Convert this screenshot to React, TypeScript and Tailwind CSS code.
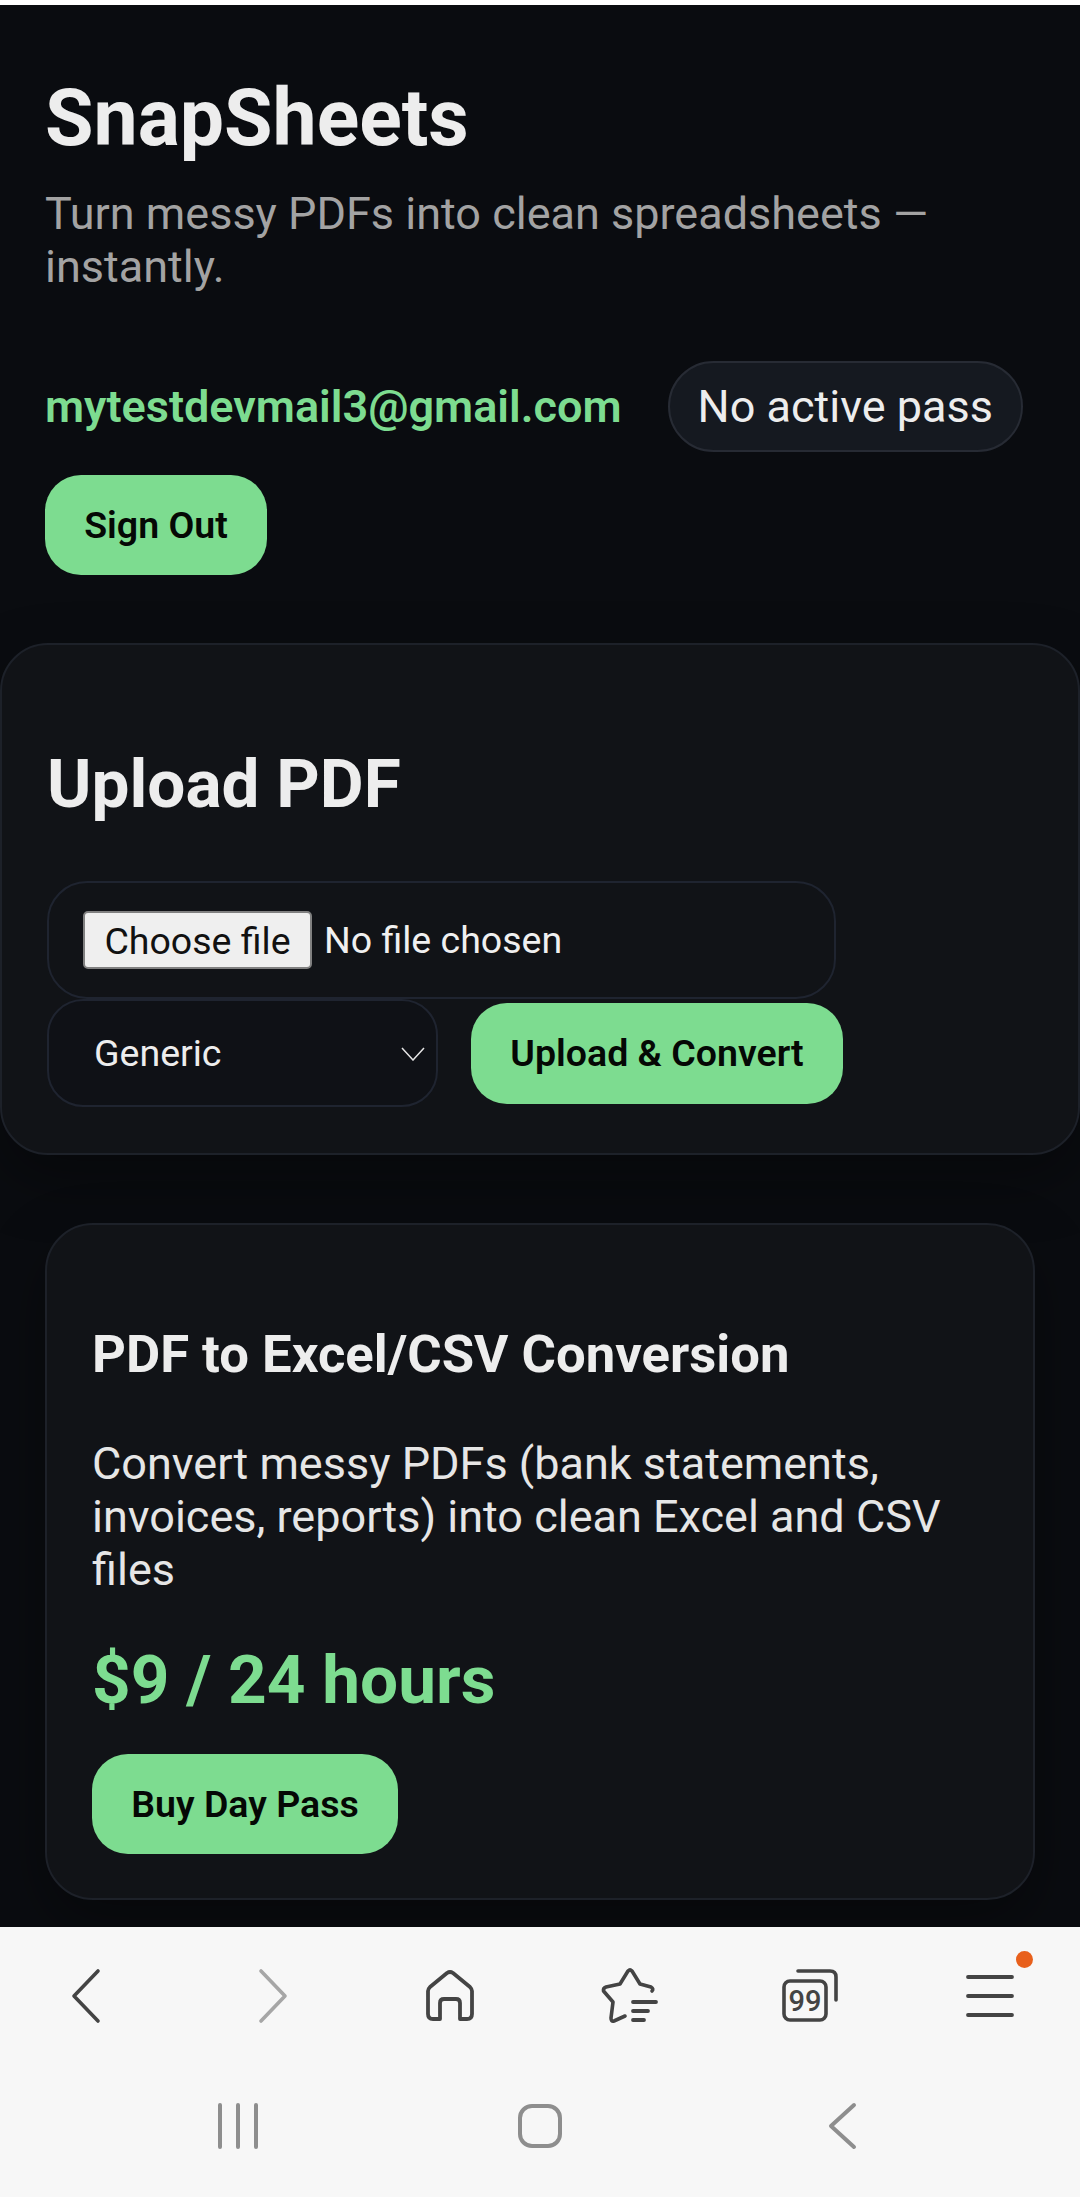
import React from "react";

const IconSvg = ({ children, className }: { children: React.ReactNode; className?: string }) => (
  <svg width="60" height="60" viewBox="0 0 60 60" fill="none" strokeLinecap="round" strokeLinejoin="round" className={className}>
    {children}
  </svg>
);

const GreenButton = ({ label, className }: { label: string; className: string }) => (
  <button className={`rounded-[36px] bg-[#7ddc90] text-[37.5px] leading-[44px] font-semibold text-[#050805] ${className}`}>
    {label}
  </button>
);

const Toolbar = () => (
  <div className="grid h-[135px] grid-cols-6 place-items-center pt-[3px] text-[#444444]">
    {/* back */}
    <IconSvg className="-translate-x-[3px]">
      <path d="M41 5 L17 30 L41 55" stroke="currentColor" strokeWidth="3.6" />
    </IconSvg>
    {/* forward */}
    <IconSvg className="translate-x-[2px] text-[#a6a6a6]">
      <path d="M19 5 L43 30 L19 55" stroke="currentColor" strokeWidth="3.6" />
    </IconSvg>
    {/* home */}
    <IconSvg>
      <path
        d="M13 53 H20 V37 Q20 33 24 33 H36 Q40 33 40 37 V53 H47 Q52 53 52 48 V25 Q52 23 50 21 L33 7 Q30 5 27 7 L10 21 Q8 23 8 25 V48 Q8 53 13 53 Z"
        stroke="currentColor"
        strokeWidth="3.8"
      />
    </IconSvg>
    {/* bookmarks */}
    <IconSvg>
      <path
        d="M25 50 L14 55 Q11 56 11 52 L13 36 L3.5 25 Q3 22 6 21 L20 18 L28 5 Q30 3 32 5 L40 18 L51 21 Q54 23 52 25"
        stroke="currentColor"
        strokeWidth="3.6"
      />
      <path d="M33 36 H56 M33 45 H48 M33 54 H44" stroke="currentColor" strokeWidth="3.8" />
    </IconSvg>
    {/* tabs */}
    <IconSvg>
      <rect x="4" y="15" width="42" height="39" rx="6" stroke="currentColor" strokeWidth="3.6" />
      <path d="M18 5 H50 Q56 5 56 11 V34" stroke="currentColor" strokeWidth="3.6" />
      <text x="25" y="45" textAnchor="middle" fill="currentColor" className="font-['Roboto',sans-serif] text-[29px] font-medium">
        99
      </text>
    </IconSvg>
    {/* menu */}
    <div className="relative">
      <IconSvg>
        <path d="M8 11 H52 M8 30 H52 M8 49 H52" stroke="currentColor" strokeWidth="3.8" />
      </IconSvg>
      <span className="absolute -top-[15px] right-[-13px] h-[17px] w-[17px] rounded-full bg-[#e8601c]" />
    </div>
  </div>
);

const SystemNav = () => (
  <div className="grid h-[130px] grid-cols-3 place-items-center px-[87px] pb-[3px] text-[#8e8e8e]">
    <IconSvg>
      <path d="M12 9 V51 M30 9 V51 M48 9 V51" stroke="currentColor" strokeWidth="4" />
    </IconSvg>
    <IconSvg>
      <rect x="10" y="10" width="40" height="40" rx="12" stroke="currentColor" strokeWidth="4" />
    </IconSvg>
    <IconSvg>
      <path d="M42 9 L19 30 L42 51" stroke="currentColor" strokeWidth="4" />
    </IconSvg>
  </div>
);

export default function App() {
  return (
    <div className="flex h-[2197px] flex-col overflow-hidden bg-[#f7f7f7] font-['Roboto',sans-serif]">
      <div className="h-[5px] bg-white" />
      <main className="flex-1 overflow-hidden bg-[#0a0c10] text-[#ededed]">
        {/* header */}
        <header className="px-[45px] pt-[68px]">
          <h1 className="text-[78.75px] leading-[90px] font-bold">SnapSheets</h1>
          <p className="mt-[24px] text-[45px] leading-[53px] text-[#a3a3a3]">
            Turn messy PDFs into clean spreadsheets — instantly.
          </p>
          <div className="mt-[68px] flex items-center gap-[46px]">
            <span className="text-[45px] leading-[53px] font-semibold text-[#7ddc90]">mytestdevmail3@gmail.com</span>
            <span className="rounded-full border-2 border-[#272b34] bg-[#151920] px-[28px] py-[17px] text-[45px] leading-[53px]">
              No active pass
            </span>
          </div>
          <GreenButton label="Sign Out" className="mt-[23px] h-[100px] w-[222px]" />
        </header>

        {/* upload card */}
        <section className="mt-[68px] h-[512px] rounded-[48px] border-2 border-[#1d2129] bg-[#111317] px-[45px] pt-[101px] shadow-[0_24px_60px_rgba(0,0,0,0.35)]">
          <h2 className="text-[67.5px] leading-[76px] font-bold">Upload PDF</h2>
          <div className="mt-[59px] flex h-[118px] w-[789px] items-center gap-[12px] rounded-[40px] border-2 border-[#1f2430] pl-[34px]">
            <button className="h-[58px] w-[229px] rounded-[5px] border-2 border-[#808080] bg-[#efefef] text-[37.5px] text-[#111111]">
              Choose file
            </button>
            <span className="text-[37.5px] text-[#f0f0f0]">No file chosen</span>
          </div>
          <div className="flex items-center gap-[33px]">
            <div className="relative">
              <select className="h-[108px] w-[391px] appearance-none rounded-[36px] border-2 border-[#1f2430] bg-[#0f1116] pl-[45px] text-[37.5px] text-[#ededed] outline-none">
                <option>Generic</option>
              </select>
              <svg width="24" height="14" viewBox="0 0 24 14" fill="none" className="pointer-events-none absolute top-[48px] right-[13px]">
                <path d="M1 1 L12 13 L23 1" stroke="#e5e5e5" strokeWidth="1.5" />
              </svg>
            </div>
            <GreenButton label="Upload & Convert" className="h-[101px] w-[372px]" />
          </div>
        </section>

        {/* pricing card */}
        <section className="mx-[45px] mt-[68px] h-[677px] rounded-[48px] border-2 border-[#1d2129] bg-[#111317] px-[45px] pt-[99px] shadow-[0_24px_60px_rgba(0,0,0,0.35)]">
          <h3 className="text-[52.65px] leading-[60px] font-bold">PDF to Excel/CSV Conversion</h3>
          <p className="mt-[53px] text-[45px] leading-[53px] text-[#e6e6e6]">
            Convert messy PDFs (bank statements, invoices, reports) into clean Excel and CSV files
          </p>
          <div className="mt-[45px] text-[67.5px] leading-[78px] font-bold text-[#7ddc90]">$9 / 24 hours</div>
          <GreenButton label="Buy Day Pass" className="mt-[35px] h-[100px] w-[306px]" />
        </section>
      </main>

      {/* browser bars */}
      <footer className="h-[270px] bg-[#f7f7f7]">
        <Toolbar />
        <SystemNav />
      </footer>
    </div>
  );
}
